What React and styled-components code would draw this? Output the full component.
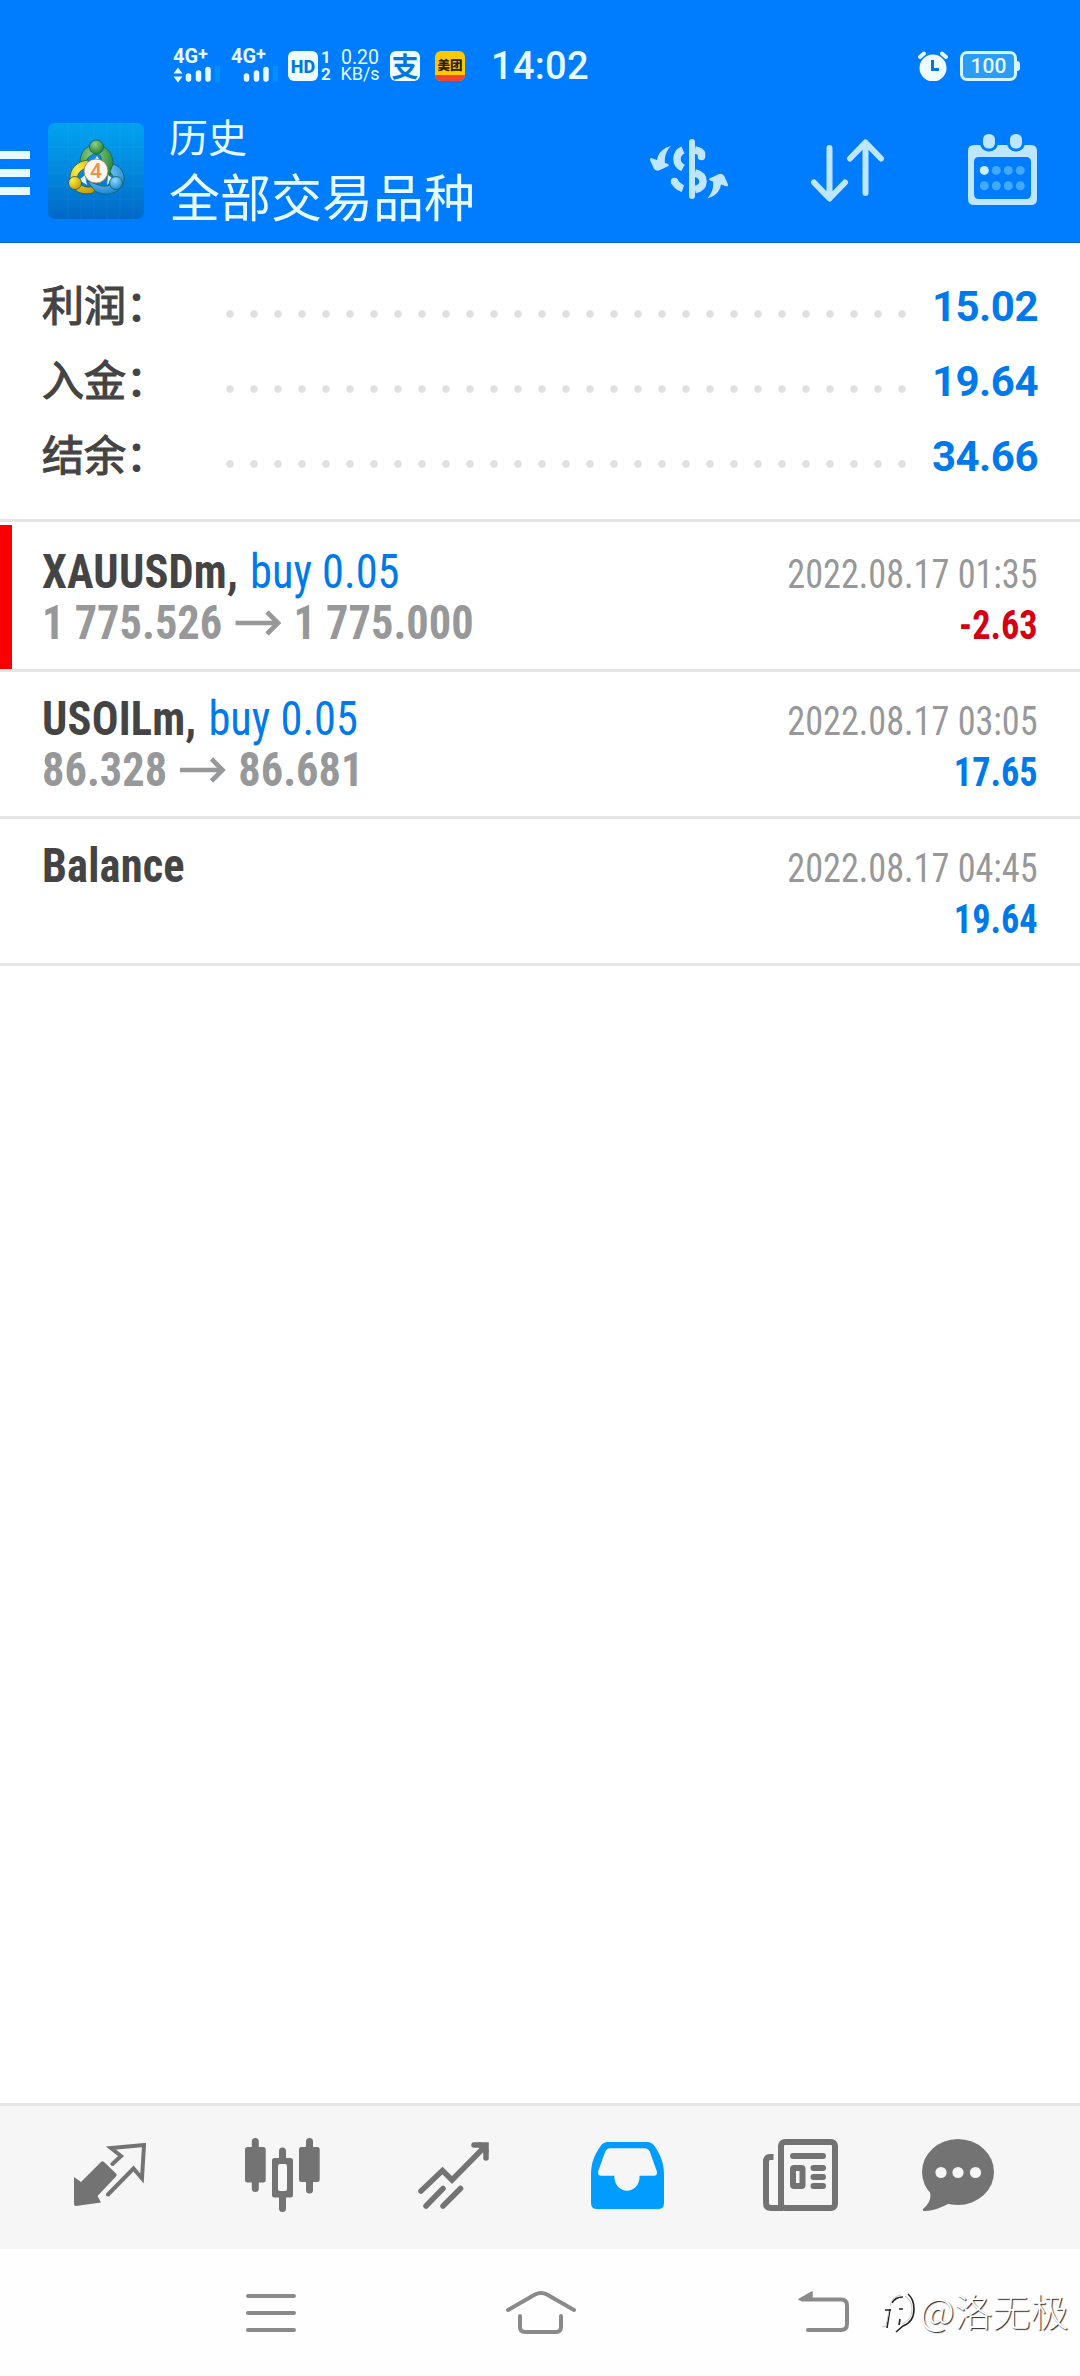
import styled, { createGlobalStyle, css } from 'styled-components'

const colors = {
   header: '#007cff',
   headerIcon: '#bfe6ff',
   headerText: '#e6fbff',
   blue: '#007aeb',
   red: '#d50014',
   dark: '#444444',
   gray: '#97989a',
   line: '#e5e5e5',
   tab: '#737373',
   tabActive: '#009dff',
   nav: '#8a8a8a',
}

const summary = [
   { label: '利润：', value: '15.02' },
   { label: '入金：', value: '19.64' },
   { label: '结余：', value: '34.66' },
]

const deals = [
   { symbol: 'XAUUSDm,', side: 'buy 0.05', open: '1 775.526', close: '1 775.000', time: '2022.08.17 01:35', profit: '-2.63', stopped: true },
   { symbol: 'USOILm,', side: 'buy 0.05', open: '86.328', close: '86.681', time: '2022.08.17 03:05', profit: '17.65' },
   { symbol: 'Balance', time: '2022.08.17 04:45', profit: '19.64' },
]

export default function App() {
   return (
      <Screen>
         <GlobalStyle />
         <Header>
            <StatusBar />
            <Toolbar>
               <MenuButton>
                  <i />
                  <i />
                  <i />
               </MenuButton>
               <Logo />
               <Titles>
                  <SubTitle>历史</SubTitle>
                  <Title>全部交易品种</Title>
               </Titles>
               <Actions>
                  <ExchangeIcon />
                  <SortIcon />
                  <CalendarIcon />
               </Actions>
            </Toolbar>
         </Header>

         <Summary>
            {summary.map((row) => (
               <SummaryRow key={row.label}>
                  <SummaryLabel>{row.label}</SummaryLabel>
                  <Dots />
                  <SummaryValue>{row.value}</SummaryValue>
               </SummaryRow>
            ))}
         </Summary>

         <DealList>
            {deals.map((deal) => (
               <Deal key={deal.time} $stopped={deal.stopped}>
                  <DealInfo>
                     <DealLine>
                        <Symbol>{deal.symbol}</Symbol>
                        {deal.side && <Side>{deal.side}</Side>}
                     </DealLine>
                     {deal.open && (
                        <DealLine>
                           <Price>{deal.open}</Price>
                           <ArrowIcon />
                           <Price>{deal.close}</Price>
                        </DealLine>
                     )}
                  </DealInfo>
                  <DealResult>
                     <Time>{deal.time}</Time>
                     <Profit $loss={deal.profit.startsWith('-')}>{deal.profit}</Profit>
                  </DealResult>
               </Deal>
            ))}
         </DealList>

         <TabBar>
            <QuotesIcon />
            <ChartIcon />
            <TradeIcon />
            <HistoryIcon />
            <NewsIcon />
            <ChatIcon />
         </TabBar>

         <NavBar>
            <svg width="50" height="46" viewBox="0 0 50 46" fill="none" stroke={colors.nav} strokeWidth="4" strokeLinecap="round">
               <path d="M2 6H48M2 23H48M2 40H48" />
            </svg>
            <svg width="72" height="46" viewBox="0 0 72 46" fill="none" stroke={colors.nav} strokeWidth="4" strokeLinecap="round">
               <path d="M3 20L30 4.5Q36 1.500 42 4.500L69 20M15 26V37Q15 42 20 42H51Q56 42 56 37V26" />
            </svg>
            <svg width="52" height="46" viewBox="0 0 52 46" fill="none" stroke={colors.nav} strokeWidth="4" strokeLinecap="round">
               <path d="M4 9.500H43Q49 9.500 49 15.500V34Q49 40 43 40H10" />
               <path d="M1 9.500L14 2V9.500Z" fill={colors.nav} strokeWidth="1.500" strokeLinejoin="round" />
            </svg>
            <Watermark>
               <svg width="34" height="48" viewBox="0 0 34 48" fill="none" strokeWidth="1.600">
                  <path d="M6 42L9 23M4 24H10M11 17Q14 11 22 11M27 8Q33 13 33 23Q33 36 22 40L15 46M18 23H22M19 33L18 39" stroke="#222" />
                  <path d="M1 41L5 40L8 25M9 20Q11 10 20 9M24 10Q31 14 31 23Q31 34 21 38" stroke="#c4c4c4" strokeWidth="1" />
               </svg>
               @洛无极
            </Watermark>
         </NavBar>
      </Screen>
   )
}

function StatusBar() {
   return (
      <Status>
         <Signal>
            <Network>
               4G<sup>+</sup>
            </Network>
            <SignalBars arrows />
         </Signal>
         <Signal>
            <Network>
               4G<sup>+</sup>
            </Network>
            <SignalBars />
         </Signal>
         <HdBadge>HD</HdBadge>
         <SimNumbers>
            <span>1</span>
            <span>2</span>
         </SimNumbers>
         <Speed>
            <span>0.20</span>
            <span>KB/s</span>
         </Speed>
         <PayBadge>支</PayBadge>
         <MeituanBadge>
            <span>美团</span>
            <i />
         </MeituanBadge>
         <Clock>14:02</Clock>
         <Spacer />
         <AlarmIcon />
         <Battery>100</Battery>
      </Status>
   )
}

function SignalBars({ arrows }) {
   return (
      <svg width="48" height="18" viewBox="0 0 48 18" stroke="#e6fbff" strokeWidth="5.500" strokeLinecap="round">
         {arrows && <path d="M1.500 7.500L6 1.500L10.500 7.500ZM1.500 10.500L6 16.500L10.500 10.500Z" fill="#e6fbff" stroke="none" />}
         <path d="M16.500 10V13M26.500 7V13M36 3.500V13" />
         <path d="M45.500 0V16" stroke="#0091ff" strokeLinecap="butt" />
      </svg>
   )
}

function AlarmIcon() {
   return (
      <svg width="30" height="30" viewBox="0 0 30 30" fill="none">
         <circle cx="15" cy="17" r="13.500" fill="#effcff" />
         <path d="M2 6L6 2.500M24 2.500L28 6" stroke="#e6fbff" strokeWidth="4" strokeLinecap="round" />
         <path d="M14.500 9V18.500H21" stroke="#0077dd" strokeWidth="3" />
      </svg>
   )
}

function Logo() {
   return (
      <svg width="96" height="96" viewBox="0 0 96 96">
         <defs>
            <linearGradient id="logo-bg" x1="0" y1="0" x2="0" y2="1">
               <stop offset="0" stopColor="#02a3f0" />
               <stop offset="0.5" stopColor="#0288df" />
               <stop offset="1" stopColor="#0068c6" />
            </linearGradient>
            <radialGradient id="logo-green" cx="0.4" cy="0.3" r="0.8">
               <stop offset="0" stopColor="#8fd08a" />
               <stop offset="1" stopColor="#117a25" />
            </radialGradient>
            <radialGradient id="logo-yellow" cx="0.3" cy="0.3" r="0.8">
               <stop offset="0" stopColor="#ffec4a" />
               <stop offset="1" stopColor="#c79a00" />
            </radialGradient>
            <radialGradient id="logo-blue" cx="0.4" cy="0.3" r="0.8">
               <stop offset="0" stopColor="#8fdcff" />
               <stop offset="1" stopColor="#0f7ccc" />
            </radialGradient>
         </defs>
         <rect width="96" height="96" rx="7" fill="url(#logo-bg)" />
         <path d="M20 0V96M33 0V96M46 0V96M59 0V96M72 0V96M85 0V96M0 24H96M0 37H96M0 50H96M0 63H96M0 76H96" stroke="#fff" strokeOpacity="0.05" />
         <g stroke="#1c5c50" strokeWidth="0.800">
            <path d="M32 43C31 29 38 22 48 22S66 30 65 44L60 58L53 40C54 33 52 31 48 31S39 34 38 40Z" fill="url(#logo-green)" />
            <path d="M40 37C29 38 21 46 22 57S34 73 45 70L50 62C40 66 32 64 30 57S34 46 41 44Z" fill="url(#logo-yellow)" />
            <path d="M65 41C75 44 79 55 74 63S57 74 47 68L39 58C47 60 52 64 59 63S68 55 62 49Z" fill="url(#logo-blue)" />
            <path d="M49 33L45 39H53ZM31 57L37 52L39 62ZM65 56L60 52L59 62Z" fill="#e4f6ff" stroke="none" />
            <circle cx="48.500" cy="24" r="7" fill="url(#logo-green)" />
            <circle cx="27" cy="60" r="6.500" fill="url(#logo-yellow)" />
            <circle cx="68" cy="60" r="6.500" fill="url(#logo-blue)" />
         </g>
         <circle cx="48" cy="48" r="12" fill="#fff6f0" stroke="#9b7a50" strokeWidth="0.800" />
         <text x="48" y="55" textAnchor="middle" fontFamily="Roboto, sans-serif" fontWeight="500" fontSize="21" fill="#f08f48">
            4
         </text>
      </svg>
   )
}

function ExchangeIcon() {
   const swoosh = 'M21 7C13 9 8 14 7 21L1 19Q0 19 0 21L4 30Q7 33 10 31L18.500 27Q19.500 26 18 25L15 24C14 17 17 11 21 7Z'
   return (
      <svg width="78" height="72" viewBox="0 -5 78 72" fill="none" stroke={colors.headerIcon} strokeWidth="7.500">
         <path d="M42 3V57" strokeWidth="6" strokeLinecap="round" />
         <path d="M33 11Q27 13.500 27 20Q27 26 33 29M45 11Q51 12 52 15.500M45 34Q53 36 53 42.500Q53 49 45 50.500M25 43Q27 47.500 33 49.500" />
         <path d="M51.500 16V17.500M24.500 42.500V42.600" strokeLinecap="round" />
         <g fill={colors.headerIcon} stroke="none">
            <path d={swoosh} />
            <path d={swoosh} transform="rotate(180 39 33.300)" />
         </g>
      </svg>
   )
}

function SortIcon() {
   return (
      <svg width="74" height="72" viewBox="0 -5 74 72" fill="none" stroke={colors.headerIcon} strokeWidth="6" strokeLinecap="round" strokeLinejoin="round">
         <path d="M18.500 9V59M3 43.500L18.500 59.500L34 43.500M54.500 54V4M39 19.500L54.500 3.500L70 19.500" />
      </svg>
   )
}

function CalendarIcon() {
   return (
      <svg width="70" height="72" viewBox="0 0 70 72">
         <path
            d="M6 11H63Q69 11 69 17V65Q69 71 63 71H6Q0 71 0 65V17Q0 11 6 11ZM11 23Q6 23 6 28V60Q6 65 11 65H58Q63 65 63 60V28Q63 23 58 23Z"
            fillRule="evenodd"
            fill={colors.headerIcon}
         />
         <g fill={colors.headerIcon} stroke={colors.header} strokeWidth="3">
            <rect x="13.500" y="-1.500" width="15" height="17.500" rx="7" />
            <rect x="40.500" y="-1.500" width="15" height="17.500" rx="7" />
         </g>
         {[36.4, 51.7].map((cy, row) =>
            [16.3, 28.3, 40.3, 52.3].map((cx, col) => <circle key={`${row}-${col}`} cx={cx} cy={cy} r="4.5" fill={row + col === 0 ? '#c8efff' : '#41a9ff'} />)
         )}
      </svg>
   )
}

function ArrowIcon() {
   return (
      <Arrow width="50" height="26" viewBox="0 0 46 26" preserveAspectRatio="none" fill="none" stroke={colors.gray} strokeWidth="4.600">
         <path d="M0 13H43M31.500 2L42.500 13L31.500 24" />
      </Arrow>
   )
}

function QuotesIcon() {
   return (
      <svg width="72" height="64" viewBox="0 0 72 64">
         <path d="M0 34L7 39L27 19Q28.500 17.500 30 19L42 30.500Q43.500 32 42 33.500L23.500 53L27 59.500L2 63Q0 63 0 61Z" fill={colors.tab} />
         <path d="M38.500 21L47 13L37 5L70 2L68 35.500L59.500 25.500L34 51.500" fill="none" stroke={colors.tab} strokeWidth="4" strokeLinecap="round" />
      </svg>
   )
}

function ChartIcon() {
   return (
      <svg width="75" height="75" viewBox="0 0 75 75" fill={colors.tab}>
         <rect y="9" width="20.700" height="35.500" rx="2.500" />
         <rect x="54" y="9" width="20.700" height="35" rx="2.500" />
         <path d="M29.500 20H45.500Q48 20 48 22.500V57Q48 59.500 45.500 59.500H29.500Q27 59.500 27 57V22.500Q27 20 29.500 20ZM35 26Q33 26 33 28V51Q33 53 35 53H40Q42 53 42 51V28Q42 26 40 26Z" fillRule="evenodd" />
         <path d="M10.300 3.500V50.500M64.500 3.500V52M37.500 13V20M37.500 59V70.500" stroke={colors.tab} strokeWidth="7" strokeLinecap="round" />
      </svg>
   )
}

function TradeIcon() {
   return (
      <svg width="72" height="67" viewBox="0 0 72 67" fill="none" stroke={colors.tab} strokeWidth="5.500" strokeLinecap="round">
         <path d="M3 49L24.500 28.500L34 38L67 4.500" />
         <path d="M56 3H68V16" />
         <path d="M62 3L68 9" />
         <path d="M8 64L25 46.500M25 64L42.500 46.500" />
      </svg>
   )
}

function HistoryIcon() {
   return (
      <svg width="73" height="67" viewBox="0 0 72 66">
         <path
            d="M17 0H55Q60 0 62.500 4C69 13 72 22 72 32V60Q72 66 66 66H6Q0 66 0 60V32C0 22 3 13 9.500 4Q12 0 17 0ZM19 6Q15.500 6 14 9.500L7 29Q6.500 33.300 10 33.300H23C23 53 48 53 48 33.300H62Q65.500 33.300 65 29L58 9.500Q56.500 6 53 6Z"
            fillRule="evenodd"
            fill={colors.tabActive}
         />
      </svg>
   )
}

function NewsIcon() {
   return (
      <svg width="75" height="72" viewBox="0 0 75 72" fill="none" stroke={colors.tab} strokeWidth="6">
         <rect x="18" y="3" width="54" height="66" rx="4" />
         <path d="M10.500 18H7Q3 18 3 23V64Q3 69 8 69H20" />
         <rect x="30" y="29" width="9.500" height="18" rx="1" />
         <path d="M30 17H60M50.500 29H60M50.500 38H60M50.500 47H60" strokeLinecap="round" />
      </svg>
   )
}

function ChatIcon() {
   return (
      <svg width="72" height="72" viewBox="0 0 72 72" fill={colors.tab}>
         <ellipse cx="36" cy="33" rx="36" ry="33" />
         <path d="M7 50C11 59 6 66 1 70Q0 72 3 72C12 72 20 68 28 64Z" />
         <g fill="#f6f6f6">
            <circle cx="19" cy="33.500" r="5.600" />
            <circle cx="36" cy="33.500" r="5.600" />
            <circle cx="53.500" cy="33.500" r="5.600" />
         </g>
      </svg>
   )
}

// 공통 스타일
const GlobalStyle = createGlobalStyle`
   * {
      box-sizing: border-box;
   }

   body {
      margin: 0;
      background-color: #fff;
   }

   svg {
      display: block;
      flex: none;
   }
`

const condensed = css`
   font-family: 'Roboto Condensed', Roboto, sans-serif;
   font-stretch: 75%;
   white-space: nowrap;
`

const Screen = styled.div`
   display: flex;
   flex-direction: column;
   width: 1080px;
   height: 2376px;
   overflow: hidden;
   background-color: #fff;
   font-family: Roboto, 'Noto Sans CJK SC', sans-serif;
`

const Header = styled.header`
   height: 243px;
   background-color: ${colors.header};
   border-bottom: 1px solid #0a68c8;
`

const Status = styled.div`
   display: flex;
   align-items: center;
   height: 102px;
   padding: 30px 60px 0 172px;
   color: ${colors.headerText};
`

const Signal = styled.div`
   width: 58px;
   height: 32px;
`

const Network = styled.div`
   display: flex;
   height: 16px;
   padding-left: 1px;
   font-size: 20px;
   font-weight: 700;
   line-height: 13px;

   sup {
      font-size: 18px;
      line-height: 8px;
   }
`

const HdBadge = styled.div`
   display: flex;
   align-items: center;
   justify-content: center;
   width: 30px;
   height: 30px;
   border-radius: 6px;
   background-color: #effcff;
   color: #0077dd;
   font-size: 18px;
   font-weight: 800;
`

const SimNumbers = styled.div`
   display: flex;
   flex-direction: column;
   width: 12px;
   margin-left: 2px;
   font-size: 17px;
   font-weight: 700;
   line-height: 17px;
   text-align: center;
`

const Speed = styled.div`
   display: flex;
   flex-direction: column;
   width: 40px;
   margin-left: 8px;
   font-size: 18px;
   line-height: 16px;
   text-align: center;

   span:first-child {
      font-size: 19.500px;
   }
`

const PayBadge = styled.div`
   display: flex;
   align-items: center;
   justify-content: center;
   width: 30px;
   height: 30px;
   margin-left: 10px;
   border-radius: 6px;
   background-color: #effcff;
   color: #0077dd;
   font-family: 'Noto Sans CJK SC', sans-serif;
   font-size: 27px;
   font-weight: 700;
   line-height: 30px;
`

const MeituanBadge = styled.div`
   display: flex;
   flex-direction: column;
   justify-content: space-between;
   width: 30px;
   height: 30px;
   margin-left: 15px;
   border-radius: 6px;
   background-color: #ffc800;
   overflow: hidden;
   color: #2b2000;
   font-family: 'Noto Sans CJK SC', sans-serif;
   font-size: 12.500px;
   font-weight: 900;
   line-height: 27px;
   text-align: center;

   span {
      height: 24px;
   }

   i {
      height: 6px;
      background-color: #f0452a;
   }
`

const Clock = styled.div`
   margin-left: 26px;
   font-size: 38px;
   font-weight: 500;
   letter-spacing: 0.3px;
   line-height: 38px;
`

const Spacer = styled.div`
   flex: 1;
`

const Battery = styled.div`
   position: relative;
   display: flex;
   align-items: center;
   justify-content: center;
   width: 57px;
   height: 30px;
   margin: 0 3px 0 12px;
   border: 3px solid #d2f5ff;
   border-radius: 7px;
   background-color: #2a9cf5;
   font-size: 21px;
   font-weight: 500;

   &::after {
      content: '';
      position: absolute;
      top: 7px;
      right: -6px;
      width: 3px;
      height: 10px;
      border-radius: 0 3px 3px 0;
      background-color: #d2f5ff;
   }
`

const Toolbar = styled.div`
   display: flex;
   height: 140px;
   padding-top: 21px;
`

const MenuButton = styled.div`
   display: flex;
   flex-direction: column;
   gap: 10px;
   width: 30px;
   margin: 28px 18px 0 0;

   i {
      height: 8px;
      background-color: ${colors.headerText};
   }
`

const Titles = styled.div`
   margin-left: 25px;
   color: ${colors.headerText};
   font-family: 'Noto Sans CJK SC', sans-serif;
   font-weight: 400;
   white-space: nowrap;
`

const SubTitle = styled.div`
   margin-top: -16px;
   font-size: 39px;
   line-height: 56px;
`

const Title = styled.div`
   font-size: 51px;
   line-height: 64px;
`

const Actions = styled.div`
   display: flex;
   flex: 1;
   justify-content: flex-end;
   padding: 11px 42px 0 0;
   gap: 83px;
`

const Summary = styled.section`
   height: 279px;
   padding: 26px 42px 0 42px;
   border-bottom: 3px solid ${colors.line};
`

const SummaryRow = styled.div`
   display: flex;
   align-items: center;
   height: 75px;
`

const SummaryLabel = styled.div`
   width: 176px;
   padding-bottom: 7px;
   color: ${colors.dark};
   font-family: 'Noto Sans CJK SC', sans-serif;
   font-size: 42px;
   font-weight: 400;
   line-height: 60px;
   -webkit-text-stroke: 1.2px ${colors.dark};
`

const Dots = styled.div`
   width: 696px;
   height: 8px;
   margin-top: 15px;
   background: radial-gradient(circle at 12px 4px, #e0e0e0 3.4px, transparent 4.2px) 0 0 / 24px 8px;
`

const SummaryValue = styled.div`
   flex: 1;
   color: ${colors.blue};
   font-size: 42px;
   font-weight: 700;
   letter-spacing: -0.5px;
   text-align: right;
`

const DealList = styled.section`
   flex: 1;
   padding-top: 3px;
`

const Deal = styled.div`
   display: flex;
   justify-content: space-between;
   height: 147px;
   padding: 21px 42px 0 42px;
   border-bottom: 3px solid ${colors.line};
   background: linear-gradient(${({ $stopped }) => ($stopped ? '#f80000, #f80000' : 'transparent, transparent')}) 0 0 / 12px 100% no-repeat;
`

const DealInfo = styled.div`
   ${condensed}
   font-size: 48px;
   transform: scaleX(0.925);
   transform-origin: left;
`

const DealLine = styled.div`
   display: flex;
   align-items: center;
   height: 51px;
   line-height: 51px;
`

const Symbol = styled.span`
   color: ${colors.dark};
   font-weight: 700;
   letter-spacing: 0.2px;
`

const Side = styled.span`
   margin-left: 13px;
   color: ${colors.blue};
`

const Price = styled.span`
   color: ${colors.gray};
   font-weight: 700;
`

const Arrow = styled.svg`
   margin: 0 13px 0 14px;
`

const DealResult = styled.div`
   ${condensed}
   padding-top: 3px;
   font-size: 40px;
   line-height: 51px;
   text-align: right;
   transform: scaleX(0.905);
   transform-origin: right;
`

const Time = styled.div`
   color: ${colors.gray};
`

const Profit = styled.div`
   color: ${({ $loss }) => ($loss ? colors.red : colors.blue)};
   font-weight: 700;
`

const TabBar = styled.nav`
   display: grid;
   grid-template-columns: 172px 172px 172px 174px 172px 144px;
   align-items: center;
   justify-items: center;
   height: 146px;
   padding: 0 50px 5px 24px;
   border-top: 3px solid ${colors.line};
   background-color: #f6f6f6;
`

const NavBar = styled.div`
   display: flex;
   align-items: flex-start;
   height: 127px;
   padding: 41px 0 0 246px;
   background-color: #fefefe;

   > svg:nth-child(2) {
      margin-left: 209px;
   }

   > svg:nth-child(3) {
      margin-left: 221px;
   }
`

const Watermark = styled.div`
   display: flex;
   align-items: center;
   gap: 5px;
   height: 46px;
   margin: -3px 0 0 31px;
   color: #fff;
   font-family: 'Noto Sans CJK SC', sans-serif;
   font-size: 38px;
   font-weight: 300;
   line-height: 46px;
   white-space: nowrap;
   text-shadow: 1px 1px 1px #222;
`
